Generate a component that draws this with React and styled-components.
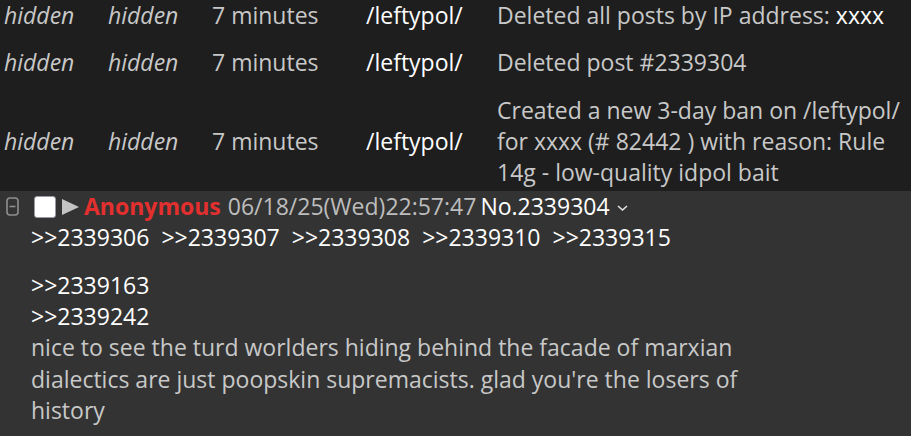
import styled, { createGlobalStyle } from 'styled-components';

const replies = ['2339306', '2339307', '2339308', '2339310', '2339315'];

function App() {
    const logRows = [
        { age: '7 minutes', board: '/leftypol/', text: <>Deleted all posts by IP address: <White>xxxx</White></> },
        { age: '7 minutes', board: '/leftypol/', text: 'Deleted post #2339304' },
        { age: '7 minutes', board: '/leftypol/', text: 'Created a new 3-day ban on /leftypol/ for xxxx (# 82442 ) with reason: Rule 14g - low-quality idpol bait' },
    ];

    return (
        <>
            <GlobalStyle />
            <Page>
                <LogTable>
                    {logRows.map((row, i) => (
                        <LogRow key={i}>
                            <Cell $italic>hidden</Cell>
                            <Cell $italic>hidden</Cell>
                            <Cell>{row.age}</Cell>
                            <Cell $white>{row.board}</Cell>
                            <Cell>{row.text}</Cell>
                        </LogRow>
                    ))}
                </LogTable>

                <Post>
                    <PostHeader>
                        <Collapse width="13" height="19" viewBox="0 0 13 19">
                            <rect x="1" y="1" width="11" height="17" rx="3" fill="none" stroke="#8e8e8e" strokeWidth="1.6" />
                            <line x1="3.5" y1="9.5" x2="9.5" y2="9.5" stroke="#8e8e8e" strokeWidth="1.6" />
                        </Collapse>
                        <Checkbox />
                        <Arrow width="17" height="16" viewBox="0 0 17 16">
                            <polygon points="0,0 17,8 0,16" fill="#c4c4c4" />
                        </Arrow>
                        <Name>Anonymous</Name>
                        <DateText>06/18/25(Wed)22:57:47</DateText>
                        <PostNo>No.2339304</PostNo>
                        <Chevron width="11" height="6" viewBox="0 0 11 6">
                            <polyline points="1,1 5.5,5 10,1" fill="none" stroke="#e0e0e0" strokeWidth="1.6" />
                        </Chevron>
                    </PostHeader>
                    <Replies>
                        {replies.map(r => (
                            <QuoteLink key={r}>&gt;&gt;{r}</QuoteLink>
                        ))}
                    </Replies>
                    <Body>
                        <QuoteLink>&gt;&gt;2339163</QuoteLink>
                        <br />
                        <QuoteLink>&gt;&gt;2339242</QuoteLink>
                        <br />
                        nice to see the turd worlders hiding behind the facade of marxian dialectics are just poopskin supremacists. glad you're the losers of history
                    </Body>
                </Post>
            </Page>
        </>
    )
}

export default App

const GlobalStyle = createGlobalStyle`
    html, body {
        margin: 0;
        height: 100%;
        background: #333333;
    }
    #root {
        height: 100%;
    }
`;

const Page = styled.div`
    display: flex;
    flex-direction: column;
    min-height: 100%;
    font-family: "Open Sans", "Noto Sans", sans-serif;
    font-size: 23px;
    line-height: 31.3px;
    color: #c8c8c8;
`;

const LogTable = styled.div`
    background: #1e1e1e;
    padding-bottom: 1px;
`;

const LogRow = styled.div`
    display: grid;
    grid-template-columns: 104px 104px 154px 131px 1fr;
    align-items: center;
    padding: 14px 0 2px;
    &:first-child {
        padding-top: 0;
    }
`;

const Cell = styled.div`
    padding: 0 4px;
    font-style: ${props => props.$italic ? 'italic' : 'normal'};
    color: ${props => props.$white ? '#ffffff' : '#c8c8c8'};
`;

const White = styled.span`
    color: #ffffff;
`;

const Post = styled.div`
    flex: 1;
    background: #333333;
`;

const PostHeader = styled.div`
    display: flex;
    align-items: center;
    height: 31px;
    padding-left: 6px;
    white-space: pre;
`;

const Collapse = styled.svg`
    flex-shrink: 0;
`;

const Checkbox = styled.span`
    width: 20px;
    height: 20px;
    margin-left: 15px;
    background: #ffffff;
    border: 1px solid #9a9aa2;
    border-radius: 3px;
`;

const Arrow = styled.svg`
    margin-left: 6px;
    margin-right: 5px;
`;

const Name = styled.span`
    font-weight: 700;
    color: #e3302f;
`;

const DateText = styled.span`
    margin-left: 7px;
    color: #bdbdbd;
`;

const PostNo = styled.span`
    margin-left: 4px;
    color: #ffffff;
`;

const Chevron = styled.svg`
    margin-left: 7px;
    margin-top: 2px;
`;

const Replies = styled.div`
    display: flex;
    gap: 12px;
    padding-left: 31px;
`;

const QuoteLink = styled.span`
    color: #ffffff;
`;

const Body = styled.div`
    margin-top: 16px;
    padding: 0 31px;
    max-width: 760px;
`;
